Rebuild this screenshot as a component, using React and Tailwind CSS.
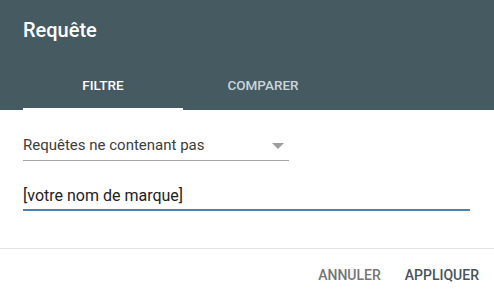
import React from 'react';

export default function App() {
  return (
    <div className="w-[494px] h-[300px] bg-white flex flex-col font-['Roboto',sans-serif] overflow-hidden">
      <header className="bg-[#465a62] h-[110px] flex flex-col">
        <h1 className="px-[23px] pt-[16px] h-[62px] text-[20px] font-medium text-white leading-[28px]">
          Requête
        </h1>
        <nav className="flex px-[23px] h-[48px]">
          <div className="w-[160px] flex flex-col">
            <span className="flex-1 flex items-center justify-center text-[13.5px] font-medium text-white">
              FILTRE
            </span>
            <span className="h-[2px] bg-white" />
          </div>
          <div className="w-[160px] flex flex-col">
            <span className="flex-1 flex items-center justify-center text-[13.5px] font-medium text-[#c8d6dc]">
              COMPARER
            </span>
            <span className="h-[2px]" />
          </div>
        </nav>
      </header>

      <div className="flex-1 flex flex-col px-[23px] pt-[23px]">
        <div className="w-[266px] h-[28px] flex items-center justify-between border-b border-[#a6a6a6] pb-[2px]">
          <span className="text-[15px] text-[#3c3c3c]">Requêtes ne contenant pas</span>
          <svg width="12" height="6" viewBox="0 0 12 6" className="mr-[5px]">
            <path d="M0 0h12L6 6z" fill="#9e9e9e" />
          </svg>
        </div>
        <div className="mt-[22px] w-[447px] h-[28px] flex items-center border-b-2 border-[#4f80b2]">
          <span className="text-[16px] text-[#222]">[votre nom de marque]</span>
        </div>
      </div>

      <footer className="h-[52px] border-t border-[#e3e3e3] flex items-center justify-end gap-[24px] pr-[15px] pt-[2px]">
        <button className="text-[14px] font-medium text-[#757575]">ANNULER</button>
        <button className="text-[14px] font-medium text-[#46535a]">APPLIQUER</button>
      </footer>
    </div>
  );
}
